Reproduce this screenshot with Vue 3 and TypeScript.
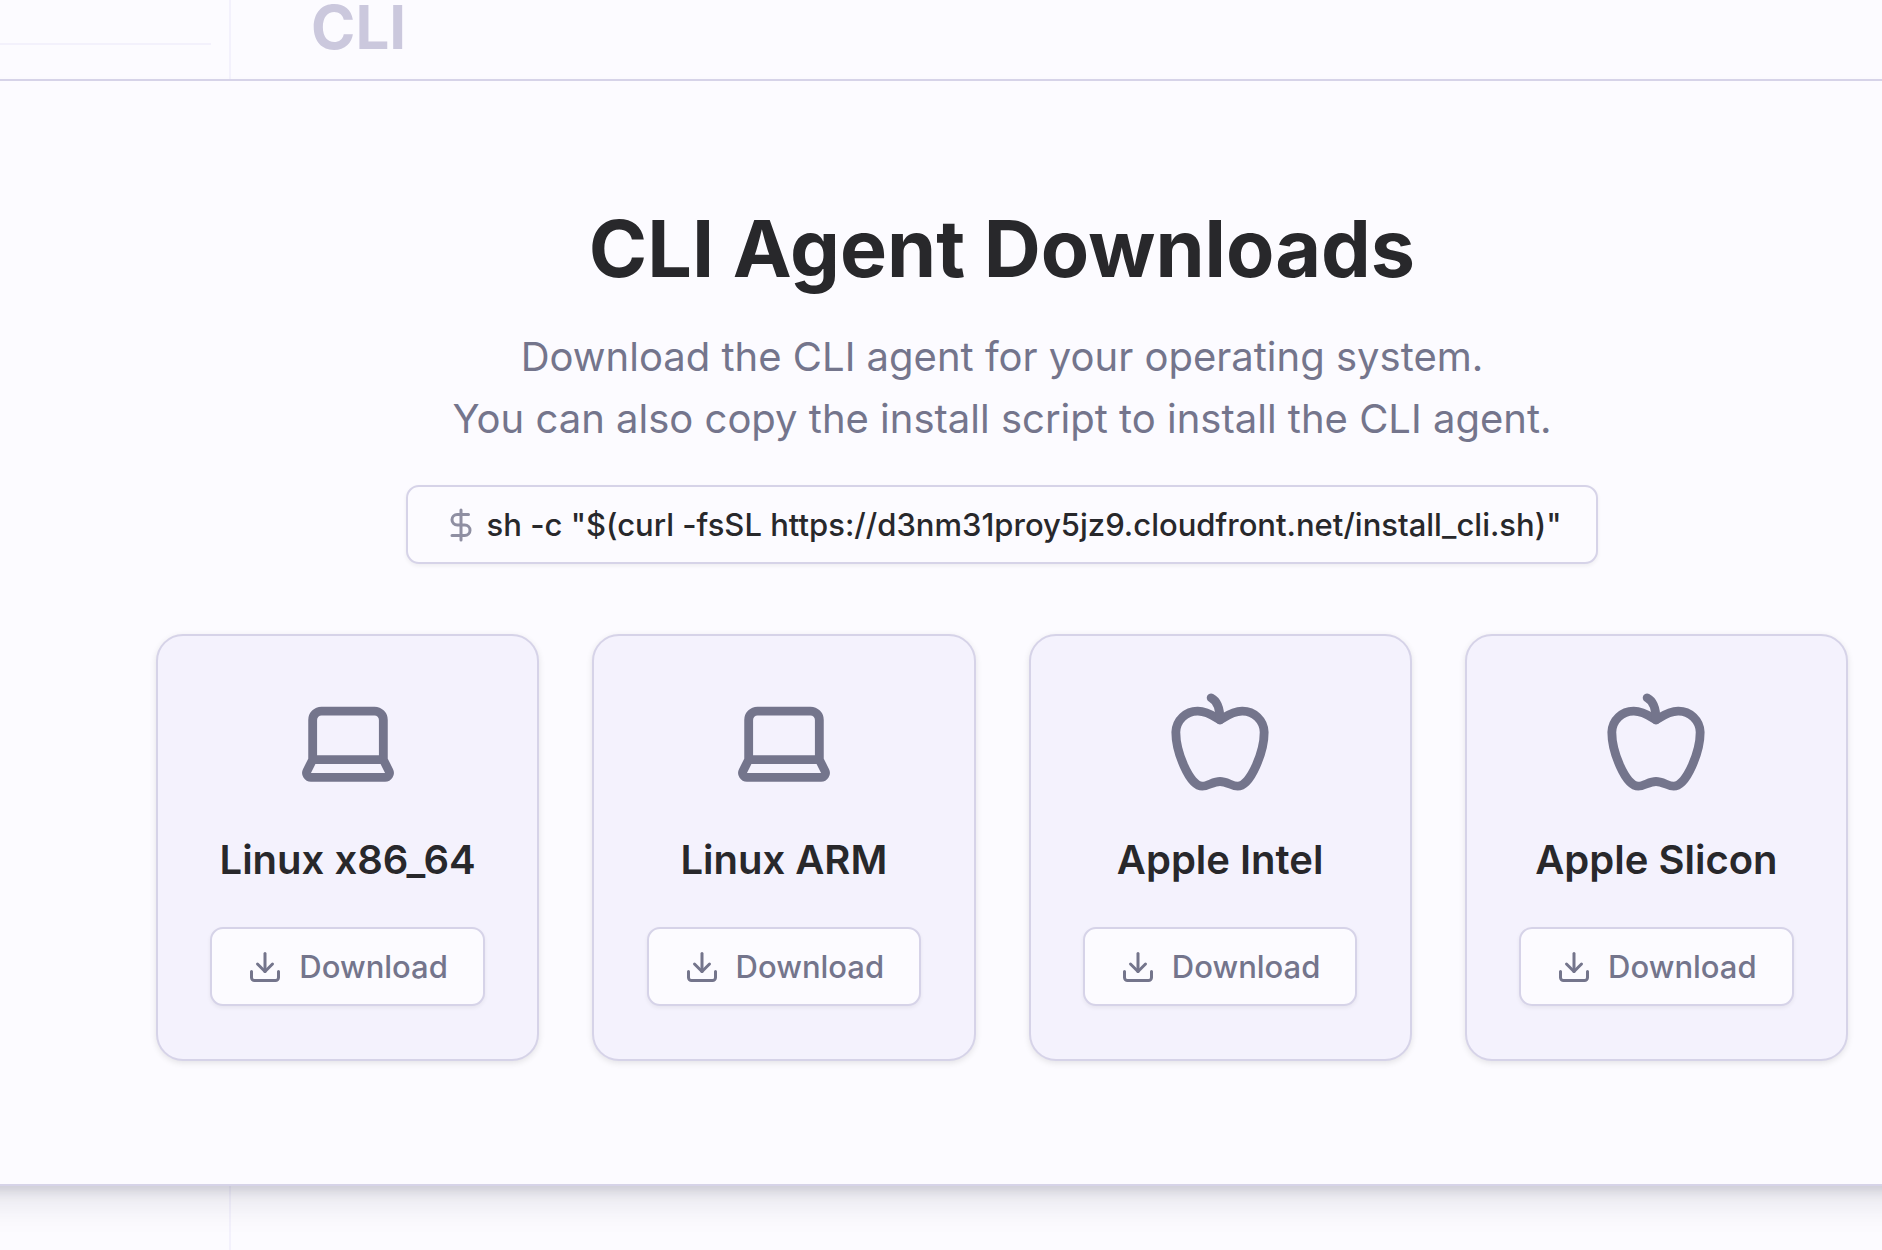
<script setup lang="ts">
type IconName = 'laptop' | 'apple'

interface Platform {
  name: string
  icon: IconName
}

const command = 'sh -c "$(curl -fsSL https://d3nm31proy5jz9.cloudfront.net/install_cli.sh)"'

const platforms: Platform[] = [
  { name: 'Linux x86_64', icon: 'laptop' },
  { name: 'Linux ARM', icon: 'laptop' },
  { name: 'Apple Intel', icon: 'apple' },
  { name: 'Apple Slicon', icon: 'apple' },
]

const iconPaths: Record<IconName, string[]> = {
  laptop: [
    'M20 16V7a2 2 0 0 0-2-2H6a2 2 0 0 0-2 2v9m16 0H4m16 0 1.28 2.55a1 1 0 0 1-.9 1.45H3.62a1 1 0 0 1-.9-1.45L4 16',
  ],
  apple: [
    'M12 20.94c1.5 0 2.75 1.06 4 1.06 3 0 6-8 6-12.22A4.91 4.91 0 0 0 17 5c-2.22 0-4 1.44-5 2-1-.56-2.78-2-5-2a4.9 4.9 0 0 0-5 4.78C2 14 5 22 8 22c1.25 0 2.5-1.06 4-1.06Z',
    'M10 2c1 .5 2 2 2 5',
  ],
}

function copyCommand(): void {
  navigator.clipboard?.writeText(command)
}
</script>

<template>
  <div class="page">
    <aside class="sidebar">
      <hr class="divider" />
    </aside>
    <main class="content">
      <h1 class="page-title">CLI</h1>
    </main>

    <div class="overlay">
      <section class="dialog" role="dialog" aria-labelledby="dialog-title">
        <h2 id="dialog-title" class="title">CLI Agent Downloads</h2>
        <p class="subtitle">
          Download the CLI agent for your operating system.<br />
          You can also copy the install script to install the CLI agent.
        </p>
        <button type="button" class="command" @click="copyCommand">
          <svg class="icon dollar" viewBox="0 0 24 24" aria-hidden="true">
            <path d="M12 2v20" />
            <path d="M17 5H9.5a3.5 3.5 0 0 0 0 7h5a3.5 3.5 0 0 1 0 7H6" />
          </svg>
          <span>{{ command }}</span>
        </button>
        <div class="cards">
          <article v-for="platform in platforms" :key="platform.name" class="card">
            <svg class="icon platform-icon" viewBox="0 0 24 24" aria-hidden="true">
              <path v-for="d in iconPaths[platform.icon]" :key="d" :d="d" />
            </svg>
            <h3 class="card-title">{{ platform.name }}</h3>
            <button type="button" class="download">
              <svg class="icon" viewBox="0 0 24 24" aria-hidden="true">
                <path d="M21 15v4a2 2 0 0 1-2 2H5a2 2 0 0 1-2-2v-4" />
                <path d="m7 10 5 5 5-5" />
                <path d="M12 15V3" />
              </svg>
              <span>Download</span>
            </button>
          </article>
        </div>
      </section>
    </div>
  </div>
</template>

<style>
body {
  margin: 0;
  background: #fcfbff;
}
</style>

<style scoped>
.page {
  position: relative;
  display: flex;
  min-height: 100vh;
  overflow: hidden;
  background: #fcfbff;
  color: #28282b;
  font-family: Inter, "Liberation Sans", sans-serif;
  font-optical-sizing: none;
}

.sidebar {
  box-sizing: border-box;
  flex: none;
  width: 231px;
  padding: 43px 18px 0 0;
  border-right: 2px solid #f3f1fc;
}

.divider {
  height: 2px;
  margin: 0;
  border: 0;
  background: #f3f1fc;
}

.content {
  flex: 1;
  padding-left: 80px;
}

.page-title {
  margin: 0;
  color: #cbc8dd;
  font-size: 60px;
  font-weight: 700;
  line-height: 54px;
}

.overlay {
  position: absolute;
  inset: 79px -148px auto -80px;
}

.dialog {
  display: flex;
  flex-direction: column;
  align-items: center;
  padding: 123px 180px 123px 234px;
  border: 2px solid #d6d3e8;
  background: #fcfbff;
  box-shadow:
    0 22px 32px -6px rgba(20, 20, 50, 0.1),
    0 8px 12px -4px rgba(20, 20, 50, 0.14);
}

.title {
  margin: 0;
  font-size: 79px;
  font-weight: 700;
  line-height: 88px;
}

.subtitle {
  margin: 34px 0 35px;
  color: #74758c;
  font-size: 40px;
  line-height: 62px;
  text-align: center;
}

.icon {
  flex: none;
  width: 36px;
  height: 36px;
  fill: none;
  stroke: #74758c;
  stroke-width: 2;
  stroke-linecap: round;
  stroke-linejoin: round;
}

.command,
.download {
  box-sizing: border-box;
  display: flex;
  align-items: center;
  height: 79px;
  padding: 0 35px;
  border: 2px solid #d6d3e8;
  border-radius: 13px;
  background: #fcfbff;
  box-shadow: 0 2px 4px rgba(0, 0, 0, 0.06);
  font-family: inherit;
  font-size: 31px;
  font-weight: 500;
  font-optical-sizing: none;
  white-space: nowrap;
  cursor: pointer;
}

.command {
  gap: 8px;
  margin-bottom: 70px;
  color: #28282b;
}

.download {
  gap: 16px;
  color: #74758c;
}

.dollar {
  opacity: 0.8;
}

.cards {
  display: grid;
  grid-template-columns: repeat(4, 1fr);
  gap: 53px;
  align-self: stretch;
}

.card {
  display: flex;
  flex-direction: column;
  align-items: center;
  padding: 53px 0;
  border: 2px solid #d6d3e8;
  border-radius: 27px;
  background: #f4f2fd;
  box-shadow: 0 2px 6px rgba(0, 0, 0, 0.1);
}

.platform-icon {
  width: 106px;
  height: 106px;
}

.card-title {
  margin: 35px 0 37px;
  font-size: 40px;
  font-weight: 600;
  line-height: 60px;
}
</style>
